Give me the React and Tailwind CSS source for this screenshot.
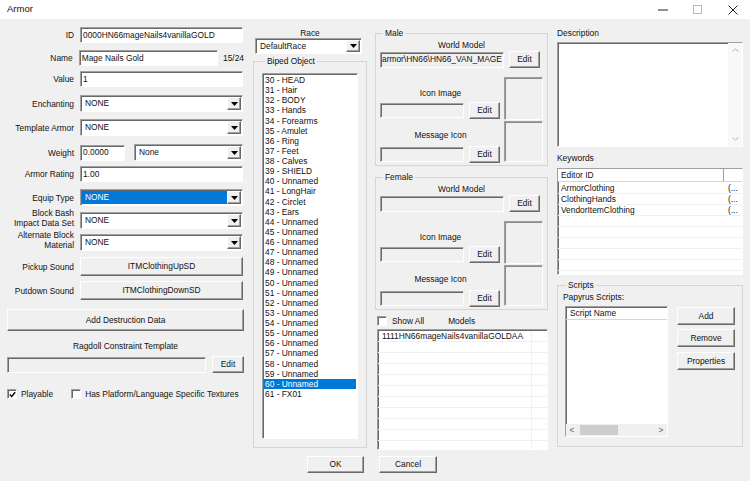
import React from 'react';

const sunkenEdge = 'border border-t-[#a0a0a0] border-l-[#a0a0a0] border-r-white border-b-white shadow-[inset_1px_1px_0_#696969]';
const sunken = `bg-white ${sunkenEdge}`;
const raised = 'bg-[#f0f0f0] border border-t-white border-l-white border-r-[#696969] border-b-[#696969] shadow-[inset_-1px_-1px_0_#a0a0a0]';

const BIPED = [
  '30 - HEAD', '31 - Hair', '32 - BODY', '33 - Hands', '34 - Forearms', '35 - Amulet', '36 - Ring', '37 - Feet',
  '38 - Calves', '39 - SHIELD', '40 - Unnamed', '41 - LongHair', '42 - Circlet', '43 - Ears', '44 - Unnamed',
  '45 - Unnamed', '46 - Unnamed', '47 - Unnamed', '48 - Unnamed', '49 - Unnamed', '50 - Unnamed', '51 - Unnamed',
  '52 - Unnamed', '53 - Unnamed', '54 - Unnamed', '55 - Unnamed', '56 - Unnamed', '57 - Unnamed', '58 - Unnamed',
  '59 - Unnamed', '60 - Unnamed', '61 - FX01',
];

const Edit = ({ className = '', gray, children }) => (
  <div className={`${gray ? 'bg-[#f0f0f0]' : 'bg-white'} ${sunkenEdge} flex items-center overflow-hidden whitespace-nowrap ${gray ? 'pl-[1px]' : 'px-[2px]'} ${className}`}>{children}</div>
);

const Button = ({ className = '', children }) => (
  <div className={`${raised} flex items-center justify-center whitespace-nowrap ${className}`}>{children}</div>
);

const DownArrow = () => (
  <svg width="7" height="4" viewBox="0 0 7 4"><polygon points="0,0 7,0 3.5,4" fill="#000" /></svg>
);

const Select = ({ value = 'NONE', className = 'w-[163px] h-full', selected }) => (
  <div className={`${sunken} flex items-stretch p-[1px] ${className}`}>
    <div className={`flex-1 flex items-center pl-[3px] ${selected ? 'bg-[#0078d7] text-white' : ''}`}>{value}</div>
    <div className={`w-[14px] ${raised} flex items-center justify-center`}><DownArrow /></div>
  </div>
);

const Check = ({ checked }) => (
  <div className={`${sunken} w-[10px] h-[10px] flex items-center justify-center`}>
    {checked && (
      <svg width="7" height="7" viewBox="0 0 7 7"><path d="M0.8 3.5 L2.7 5.5 L6.2 1.2" stroke="#000" strokeWidth="1.4" fill="none" /></svg>
    )}
  </div>
);

const Row = ({ label, cls, children, two }) => (
  <div className={`flex items-center ${cls}`}>
    <div className={`w-[67px] mr-[6px] text-right leading-[10px] whitespace-nowrap ${two ? 'mb-[6px]' : ''}`}>{label}</div>
    {children}
  </div>
);

const Group = ({ legend, className = '', children }) => (
  <fieldset className={`border border-[#d5d5d5] ${className}`}>
    <legend className="ml-[3px] px-[2px] leading-[10px]">{legend}</legend>
    {children}
  </fieldset>
);

const ImageBox = ({ className = '' }) => (
  <div className={`w-[39px] border border-t-[#a0a0a0] border-l-[#a0a0a0] border-r-white border-b-white shadow-[inset_1px_1px_0_#8a8a8a] ${className}`} />
);

const ModelGroup = ({ legend, className = '', path }) => (
  <Group legend={legend} className={`px-[4px] pb-[2px] ${className}`}>
    <div className="mt-[2px] h-[10px] leading-[10px] text-center">World Model</div>
    <div className="mt-[1px] h-[17px] flex items-center">
      <Edit gray className="w-[124px] h-[16px]">{path}</Edit>
      <Button className="ml-[5px] w-[31px] h-[17px]">Edit</Button>
    </div>
    <div className="mt-[9px] flex">
      <div className="w-[121px] flex flex-col">
        <div className="mt-[11px] h-[10px] leading-[10px] text-center">Icon Image</div>
        <div className="mt-[4px] h-[17px] flex items-center">
          <Edit gray className="w-[84px] h-[15px]" />
          <Button className="ml-[5px] w-[31px] h-[17px]">Edit</Button>
        </div>
        <div className="mt-[11px] h-[10px] leading-[10px] text-center">Message Icon</div>
        <div className="mt-[6px] h-[17px] flex items-center">
          <Edit gray className="w-[84px] h-[15px]" />
          <Button className="ml-[5px] w-[31px] h-[17px]">Edit</Button>
        </div>
      </div>
      <div className="ml-[3px] flex flex-col">
        <ImageBox className="h-[43px]" />
        <ImageBox className="mt-[1px] h-[41px]" />
      </div>
    </div>
  </Group>
);

const Armor = () => {
  return (
    <div className="w-[750px] h-[481px] bg-[#f0f0f0] overflow-hidden text-[8.4px] text-[#111] font-['Liberation_Sans',Arial,sans-serif]">
      {/* title bar */}
      <div className="h-[19px] bg-white flex items-center pl-[7px]">
        <span className="flex-1 text-[9.5px]">Armor</span>
        <div className="w-[35px] h-full flex items-center justify-center">
          <svg width="10" height="2" viewBox="0 0 10 2"><rect width="10" height="1" y="0.5" fill="#222" /></svg>
        </div>
        <div className="w-[35px] h-full flex items-center justify-center">
          <svg width="9" height="9" viewBox="0 0 9 9"><rect x="0.5" y="0.5" width="8" height="8" fill="none" stroke="#b8b8b8" /></svg>
        </div>
        <div className="w-[35px] h-full flex items-center justify-center">
          <svg width="10" height="10" viewBox="0 0 10 10"><path d="M0.5 0.5 L9.5 9.5 M9.5 0.5 L0.5 9.5" stroke="#222" strokeWidth="1" /></svg>
        </div>
      </div>

      <div className="flex items-start pl-[7px] h-[429px]">
        {/* left column */}
        <div className="w-[237px] flex flex-col pt-[8px]">
          <Row label="ID" cls="h-[16px]"><Edit className="w-[163px] h-full">0000HN66mageNails4vanillaGOLD</Edit></Row>
          <Row label="Name" cls="mt-[7px] h-[16px]">
            <Edit className="w-[142px] h-full">Mage Nails Gold</Edit>
            <span className="ml-[5px]">15/24</span>
          </Row>
          <Row label="Value" cls="mt-[5px] h-[16px]"><Edit className="w-[163px] h-full">1</Edit></Row>
          <Row label="Enchanting" cls="mt-[8px] h-[17px]"><Select /></Row>
          <Row label="Template Armor" cls="mt-[7px] h-[17px]"><Select /></Row>
          <Row label="Weight" cls="mt-[8px] h-[17px]">
            <Edit className="w-[45px] h-[16px]">0.0000</Edit>
            <Select value="None" className="ml-[9px] w-[109px] h-full" />
          </Row>
          <Row label="Armor Rating" cls="mt-[5px] h-[16px]"><Edit className="w-[163px] h-full">1.00</Edit></Row>
          <Row label="Equip Type" cls="mt-[7px] h-[17px]"><Select selected /></Row>
          <Row label={<>Block Bash<br />Impact Data Set</>} two cls="mt-[6px] h-[17px]"><Select /></Row>
          <Row label={<>Alternate Block<br />Material</>} two cls="mt-[5px] h-[17px]"><Select /></Row>
          <Row label="Pickup Sound" cls="mt-[6px] h-[19px]"><Button className="w-[163px] h-full">ITMClothingUpSD</Button></Row>
          <Row label="Putdown Sound" cls="mt-[5px] h-[19px]"><Button className="w-[163px] h-full">ITMClothingDownSD</Button></Row>
          <Button className="mt-[9px] h-[22px] w-full">Add Destruction Data</Button>
          <div className="mt-[10px] h-[10px] leading-[10px] text-center">Ragdoll Constraint Template</div>
          <div className="mt-[5px] h-[17px] flex items-center">
            <Edit gray className="w-[199px] h-[16px]" />
            <Button className="ml-[6px] w-[32px] h-[17px]">Edit</Button>
          </div>
          <div className="mt-[16px] h-[10px] flex items-center whitespace-nowrap">
            <Check checked />
            <span className="ml-[4px]">Playable</span>
            <div className="ml-[18px]"><Check /></div>
            <span className="ml-[4px]">Has Platform/Language Specific Textures</span>
          </div>
        </div>

        {/* biped column */}
        <div className="w-[114px] ml-[9px] flex flex-col pt-[9px]">
          <div className="h-[10px] leading-[10px] text-center">Race</div>
          <Select value="DefaultRace" className="ml-[2px] w-[107px] h-[16px]" />
          <Group legend="Biped Object" className="mt-[2px] px-[8px] pb-[8px]">
            <div className={`${sunken} mt-[7px] h-[366px] pt-[1px] px-[1px]`}>
              {BIPED.map((b) => (
                <div key={b} className={`h-[10.13px] leading-[10.13px] pl-[1px] whitespace-nowrap ${b === '60 - Unnamed' ? 'bg-[#0078d7] text-white' : ''}`}>{b}</div>
              ))}
            </div>
          </Group>
        </div>

        {/* models column */}
        <div className="w-[173px] ml-[8px] flex flex-col pt-[9px]">
          <ModelGroup legend="Male" path="armor\HN66\HN66_VAN_MAGE" />
          <ModelGroup legend="Female" className="mt-[6px]" path="" />
          <div className="mt-[6px] h-[10px] flex items-center pl-[2px]">
            <Check />
            <span className="ml-[5px]">Show All</span>
            <span className="ml-[24px]">Models</span>
          </div>
          <div className={`${sunken} mt-[3px] ml-[2px] w-[171px] h-[121px] overflow-hidden pt-[1px]`}>
            {Array.from({ length: 11 }).map((_, i) => (
              <div key={i} className="h-[11px] leading-[11px] flex border-b border-[#f0f0f0]">
                <div className="w-[154px] pl-[4px] border-r border-[#f0f0f0] whitespace-nowrap">{i === 0 ? '1111HN66mageNails4vanillaGOLDAA' : ''}</div>
              </div>
            ))}
          </div>
        </div>

        {/* right column */}
        <div className="w-[186px] ml-[9px] flex flex-col pt-[9px]">
          <div className="h-[10px] leading-[10px]">Description</div>
          <div className={`${sunken} mt-[4px] h-[105px] flex justify-end`}>
            <div className="w-[14px] bg-[#f8f8f8] flex flex-col items-center justify-between py-[5px]">
              <svg width="7" height="4" viewBox="0 0 7 4"><path d="M0.5 3.5 L3.5 0.8 L6.5 3.5" stroke="#b4b4b4" fill="none" /></svg>
              <svg width="7" height="4" viewBox="0 0 7 4"><path d="M0.5 0.5 L3.5 3.2 L6.5 0.5" stroke="#b4b4b4" fill="none" /></svg>
            </div>
          </div>
          <div className="mt-[6px] h-[10px] leading-[10px]">Keywords</div>
          <div className={`${sunken} mt-[5px] h-[107px] overflow-hidden`}>
            <div className="h-[13px] flex border-b border-[#d5d5d5] bg-white">
              <div className="w-[166px] pl-[3px] flex items-center border-r border-[#a0a0a0]">Editor ID</div>
              <div className="flex-1 border-l border-white" />
            </div>
            <div className="pt-[1px]">
              {['ArmorClothing', 'ClothingHands', 'VendorItemClothing', '', '', '', '', '', ''].map((k, i) => (
                <div key={i} className="h-[11px] leading-[10px] flex border-b border-[#f0f0f0]">
                  <div className="w-[167px] pl-[3px] whitespace-nowrap">{k}</div>
                  <div className="pl-[3px]">{k ? '(...' : ''}</div>
                </div>
              ))}
            </div>
          </div>
          <Group legend="Scripts" className="mt-[5px] px-[5px] pb-[9px]">
            <div className="mt-[2px] h-[10px] leading-[10px]">Papyrus Scripts:</div>
            <div className="mt-[4px] flex">
              <div className={`${sunken} ml-[2px] w-[103px] h-[131px] flex flex-col`}>
                <div className="h-[13px] flex items-center pl-[4px] border-b border-[#d5d5d5]">Script Name</div>
                <div className="flex-1" />
                <div className="h-[12px] bg-[#f0f0f0] flex items-center">
                  <span className="w-[12px] text-center text-[#606060]">&lt;</span>
                  <div className="ml-[2px] w-[38px] h-[10px] bg-[#cdcdcd]" />
                  <div className="flex-1" />
                  <span className="w-[12px] text-center text-[#606060]">&gt;</span>
                </div>
              </div>
              <div className="ml-[9px] w-[58px] flex flex-col">
                <Button className="mt-[1px] h-[18px]">Add</Button>
                <Button className="mt-[4px] h-[18px]">Remove</Button>
                <Button className="mt-[5px] h-[18px]">Properties</Button>
              </div>
            </div>
          </Group>
        </div>
      </div>

      {/* bottom buttons */}
      <div className="mt-[8px] flex pl-[307px]">
        <Button className="w-[57px] h-[17px]">OK</Button>
        <Button className="ml-[15px] w-[58px] h-[17px]">Cancel</Button>
      </div>
    </div>
  );
};

export default function App() {
  return <Armor />;
}
